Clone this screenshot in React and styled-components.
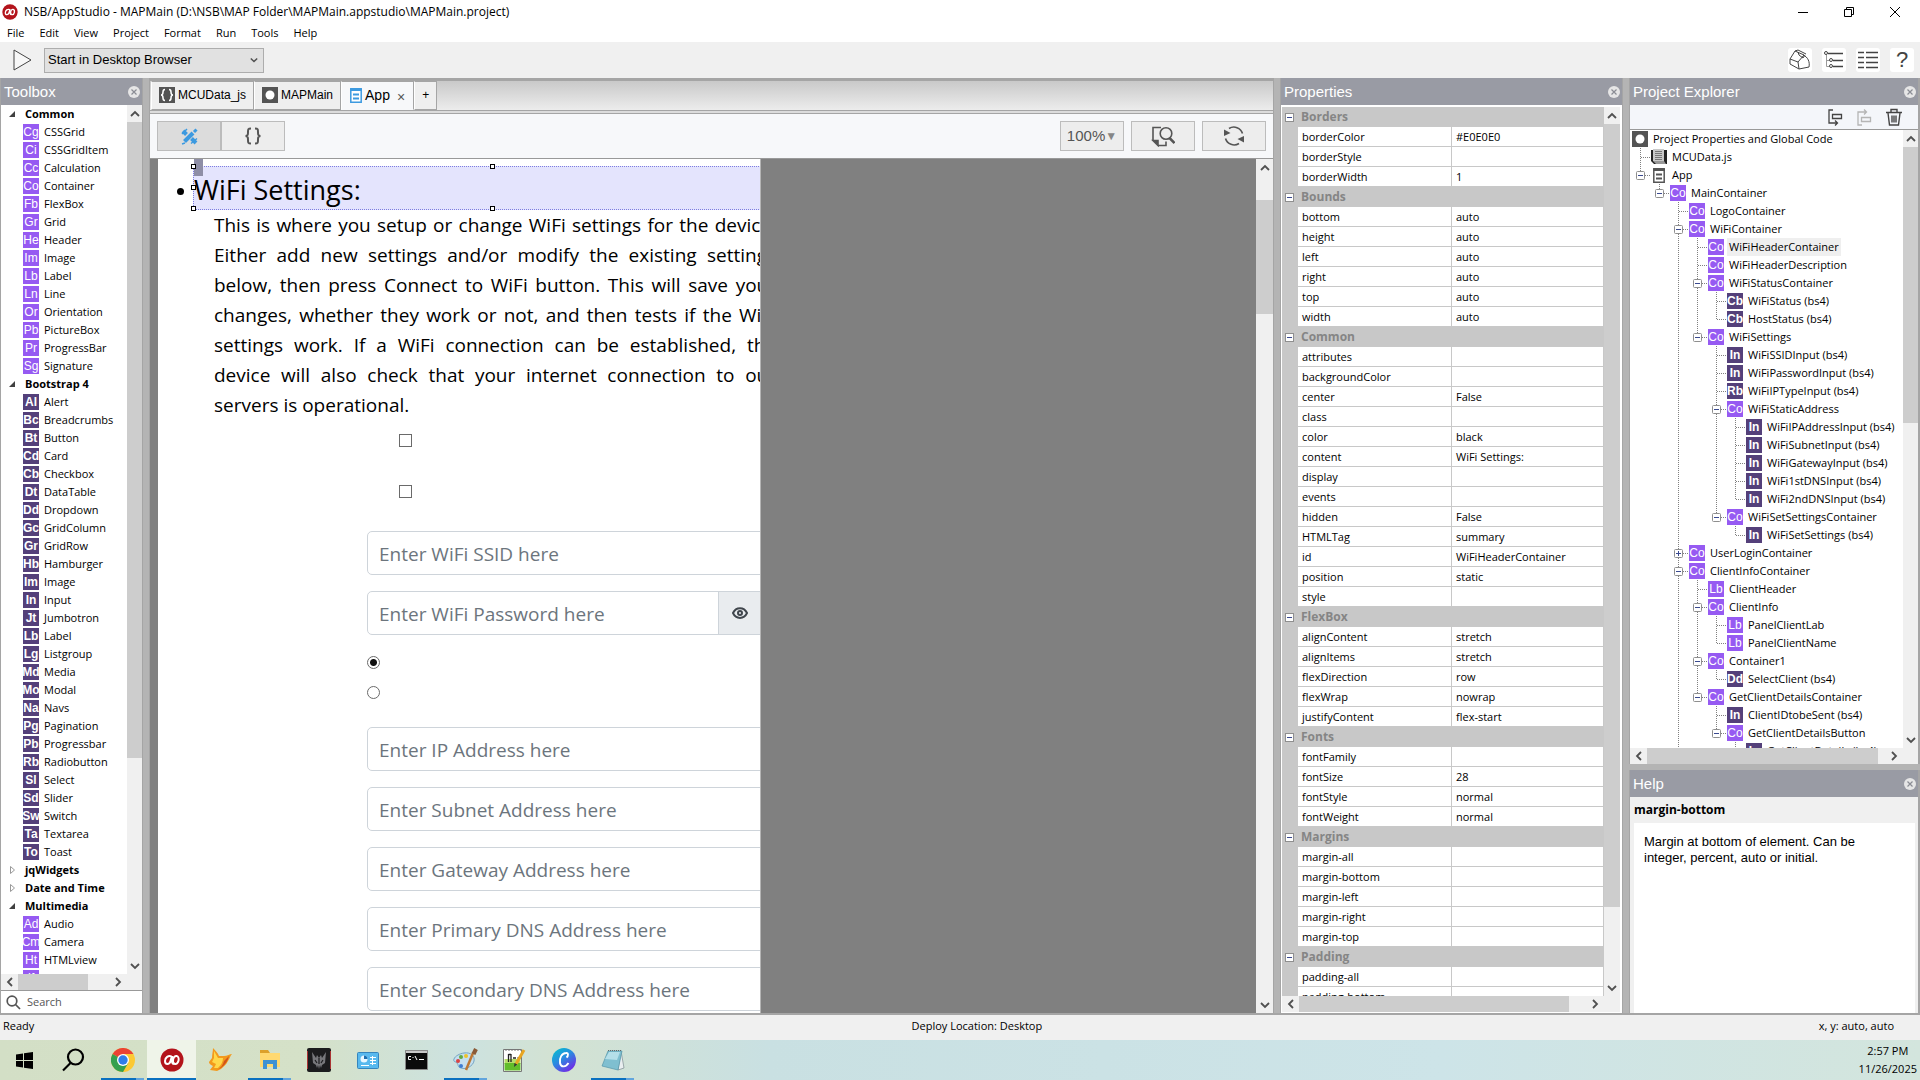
import React from "react";
import styled, { createGlobalStyle, css } from "styled-components";

//Data

const menus = ["File", "Edit", "View", "Project", "Format", "Run", "Tools", "Help"];

const toolbox = [
  {
    name: "Common",
    open: true,
    items: [
      ["Cg", "CSSGrid"],
      ["Ci", "CSSGridItem"],
      ["Cc", "Calculation"],
      ["Co", "Container"],
      ["Fb", "FlexBox"],
      ["Gr", "Grid"],
      ["He", "Header"],
      ["Im", "Image"],
      ["Lb", "Label"],
      ["Ln", "Line"],
      ["Or", "Orientation"],
      ["Pb", "PictureBox"],
      ["Pr", "ProgressBar"],
      ["Sg", "Signature"],
    ],
  },
  {
    name: "Bootstrap 4",
    open: true,
    dark: true,
    items: [
      ["Al", "Alert"],
      ["Bc", "Breadcrumbs"],
      ["Bt", "Button"],
      ["Cd", "Card"],
      ["Cb", "Checkbox"],
      ["Dt", "DataTable"],
      ["Dd", "Dropdown"],
      ["Gc", "GridColumn"],
      ["Gr", "GridRow"],
      ["Hb", "Hamburger"],
      ["Im", "Image"],
      ["In", "Input"],
      ["Jt", "Jumbotron"],
      ["Lb", "Label"],
      ["Lg", "Listgroup"],
      ["Md", "Media"],
      ["Mo", "Modal"],
      ["Na", "Navs"],
      ["Pg", "Pagination"],
      ["Pb", "Progressbar"],
      ["Rb", "Radiobutton"],
      ["Sl", "Select"],
      ["Sd", "Slider"],
      ["Sw", "Switch"],
      ["Ta", "Textarea"],
      ["To", "Toast"],
    ],
  },
  { name: "jqWidgets", items: [] },
  { name: "Date and Time", items: [] },
  {
    name: "Multimedia",
    open: true,
    items: [
      ["Ad", "Audio"],
      ["Cm", "Camera"],
      ["Ht", "HTMLview"],
      ["If", "iFrame"],
    ],
  },
];

const properties = [
  ["Borders", [["borderColor", "#E0E0E0"], ["borderStyle", ""], ["borderWidth", "1"]]],
  [
    "Bounds",
    [
      ["bottom", "auto"],
      ["height", "auto"],
      ["left", "auto"],
      ["right", "auto"],
      ["top", "auto"],
      ["width", "auto"],
    ],
  ],
  [
    "Common",
    [
      ["attributes", ""],
      ["backgroundColor", ""],
      ["center", "False"],
      ["class", ""],
      ["color", "black"],
      ["content", "WiFi Settings:"],
      ["display", ""],
      ["events", ""],
      ["hidden", "False"],
      ["HTMLTag", "summary"],
      ["id", "WiFiHeaderContainer"],
      ["position", "static"],
      ["style", ""],
    ],
  ],
  [
    "FlexBox",
    [
      ["alignContent", "stretch"],
      ["alignItems", "stretch"],
      ["flexDirection", "row"],
      ["flexWrap", "nowrap"],
      ["justifyContent", "flex-start"],
    ],
  ],
  [
    "Fonts",
    [
      ["fontFamily", ""],
      ["fontSize", "28"],
      ["fontStyle", "normal"],
      ["fontWeight", "normal"],
    ],
  ],
  [
    "Margins",
    [
      ["margin-all", ""],
      ["margin-bottom", ""],
      ["margin-left", ""],
      ["margin-right", ""],
      ["margin-top", ""],
    ],
  ],
  ["Padding", [["padding-all", ""], ["padding-bottom", ""]]],
];

// depth, tag, label, toggle
const project = [
  [0, "root", "Project Properties and Global Code"],
  [1, "script", "MCUData.js"],
  [1, "form", "App", "-"],
  [2, "Co", "MainContainer", "-"],
  [3, "Co", "LogoContainer"],
  [3, "Co", "WiFiContainer", "-"],
  [4, "Co", "WiFiHeaderContainer"],
  [4, "Co", "WiFiHeaderDescription"],
  [4, "Co", "WiFiStatusContainer", "-"],
  [5, "Cb", "WiFiStatus (bs4)"],
  [5, "Cb", "HostStatus (bs4)"],
  [4, "Co", "WiFiSettings", "-"],
  [5, "In", "WiFiSSIDInput (bs4)"],
  [5, "In", "WiFiPasswordInput (bs4)"],
  [5, "Rb", "WiFiIPTypeInput (bs4)"],
  [5, "Co", "WiFiStaticAddress", "-"],
  [6, "In", "WiFiIPAddressInput (bs4)"],
  [6, "In", "WiFiSubnetInput (bs4)"],
  [6, "In", "WiFiGatewayInput (bs4)"],
  [6, "In", "WiFi1stDNSInput (bs4)"],
  [6, "In", "WiFi2ndDNSInput (bs4)"],
  [5, "Co", "WiFiSetSettingsContainer", "-"],
  [6, "In", "WiFiSetSettings (bs4)"],
  [3, "Co", "UserLoginContainer", "+"],
  [3, "Co", "ClientInfoContainer", "-"],
  [4, "Lb", "ClientHeader"],
  [4, "Co", "ClientInfo", "-"],
  [5, "Lb", "PanelClientLab"],
  [5, "Lb", "PanelClientName"],
  [4, "Co", "Container1", "-"],
  [5, "Dd", "SelectClient (bs4)"],
  [4, "Co", "GetClientDetailsContainer", "-"],
  [5, "In", "ClientIDtobeSent (bs4)"],
  [5, "Co", "GetClientDetailsButton", "-"],
  [6, "In", "GetClientDetails (bs4)"],
];

const description = [
  "This is where you setup or change WiFi settings for the device.",
  "Either add new settings and/or modify the existing settings",
  "below, then press Connect to WiFi button. This will save your",
  "changes, whether they work or not, and then tests if the WiFi",
  "settings work. If a WiFi connection can be established, the",
  "device will also check that your internet connection to our",
  "servers is operational.",
];

const addresses = [
  "Enter IP Address here",
  "Enter Subnet Address here",
  "Enter Gateway Address here",
  "Enter Primary DNS Address here",
  "Enter Secondary DNS Address here",
];

// does a sibling at this depth follow further down the list?
const continues = (index, depth) => {
  for (let i = index + 1; i < project.length; i++) {
    if (project[i][0] < depth) return false;
    if (project[i][0] === depth) return true;
  }
  return depth === 3;
};

//Styled-Components

const GlobalStyle = createGlobalStyle`
  * {
    box-sizing: border-box;
  }
  body {
    margin: 0;
    background: #f0f0f0;
    color: #000;
    font: 12px/18px "Open Sans", "Noto Sans", sans-serif;
    overflow: hidden;
  }
  button, input, select {
    font: inherit;
    color: inherit;
    margin: 0;
    padding: 0;
    border: 0;
    border-radius: 0;
    background: none;
  }
  svg {
    display: block;
    flex: none;
  }
`;

const arial = css`
  font-family: "Liberation Sans", Arial, sans-serif;
`;

const Window = styled.div`
  display: flex;
  flex-direction: column;
  height: 100vh;
  font-size: 11px;
`;

const TitleBar = styled.header`
  display: flex;
  align-items: center;
  height: 23px;
  padding: 0 19px 0 2px;
  gap: 6px;
  background: #fff;
  font-size: 12px;
`;

const WindowTitle = styled.span`
  flex: 1;
`;

const WindowButtons = styled.div`
  display: flex;
  gap: 34px;
`;

const IconButton = styled.button`
  display: flex;
  align-items: center;
  justify-content: center;
`;

const MenuBar = styled.nav`
  display: flex;
  gap: 15px;
  height: 19px;
  padding: 1px 0 0 7px;
  background: #fff;
`;

const MainToolbar = styled.div`
  display: flex;
  align-items: center;
  height: 36px;
  padding: 0 6px 0 13px;
  gap: 10px;
`;

const StartSelect = styled.div`
  display: flex;
  align-items: center;
  width: 220px;
  margin-right: auto;
  padding-right: 5px;
  border: 1px solid #adadad;
  background: #e1e1e1;

  select {
    ${arial}
    flex: 1;
    height: 23px;
    padding-left: 3px;
    font-size: 13px;
    appearance: none;
  }
`;

const ToolButton = styled(IconButton)`
  ${arial}
  width: 24px;
  height: 24px;
  border-radius: 3px;
  background: #fff;
  font-size: 22px;
  color: #444;
`;

const Workspace = styled.main`
  display: grid;
  grid-template-columns: 143px minmax(0, 1fr) 343px 291px;
  column-gap: 6px;
  flex: 1;
  min-height: 0;
  border-bottom: 2px solid #a5a5a5;
  background: #b4b4b4;
`;

const Panel = styled.section`
  display: flex;
  flex-direction: column;
  min-width: 0;
  min-height: 0;
  border: solid #a5a5a5;
  border-width: 0 ${(p) => p.$right || 1}px 0 1px;
  background: ${(p) => p.$bg || "#fff"};
`;

const SideColumn = styled.div`
  display: grid;
  grid-template-rows: minmax(0, 1fr) 243px;
  row-gap: 6px;
  min-height: 0;
`;

const PanelHeader = styled.header`
  ${arial}
  display: flex;
  flex: none;
  align-items: center;
  justify-content: space-between;
  height: 27px;
  padding: 0 2px 0 3px;
  background: #999ba4;
  color: #fff;
  font-size: 15px;
`;

const ScrollArea = styled.div`
  display: flex;
  flex: 1;
  min-height: 0;
`;

const Clip = styled.div`
  flex: 1;
  min-width: 0;
  overflow: hidden;
  background: ${(p) => p.$bg || "#fff"};
`;

const ScrollTrack = styled.div`
  display: flex;
  flex: none;
  flex-direction: ${(p) => (p.$across ? "row" : "column")};
  ${(p) => (p.$across ? `height: 16px; padding-right: ${p.$corner}px;` : `width: ${p.$wide || 15}px;`)}
  background: #f0f0f0;
`;

const ScrollArrow = styled(IconButton)`
  flex: 0 0 17px;
`;

const ScrollPart = styled.div`
  flex: ${(p) => p.$share} 0 0;
  background: ${(p) => (p.$thumb ? "#cdcdcd" : "transparent")};
`;

const GroupRow = styled.div`
  display: flex;
  align-items: center;
  height: 18px;
  padding-left: 8px;
  gap: 8px;
  font-weight: 700;
`;

const ItemRow = styled.div`
  display: flex;
  align-items: center;
  height: 18px;
  padding-left: 22px;
  gap: 5px;
  white-space: nowrap;
`;

const Tag = styled.span`
  ${arial}
  display: flex;
  flex: none;
  justify-content: center;
  width: 16px;
  height: 16px;
  overflow: hidden;
  background: ${(p) => (p.$dark ? "#54407a" : "#965af2")};
  color: #fff;
  font-size: 12px;
  font-weight: ${(p) => (p.$dark ? 700 : 400)};
  line-height: 17px;
`;

const SearchBox = styled.label`
  display: flex;
  align-items: center;
  height: 23px;
  padding-left: 5px;
  gap: 6px;
  border-top: 1px solid #999;
  background: #fff;

  input {
    width: 90px;
    outline: none;
  }
  input::placeholder {
    color: #555;
    opacity: 1;
  }
`;

const TabStrip = styled.div`
  display: flex;
  align-items: flex-end;
  flex: none;
  height: 35px;
  padding: 0 0 3px 1px;
  border-top: 3px solid #a5a5a5;
  background: linear-gradient(#c9c9c9, #f0f0f0);
  box-shadow: inset 0 -2px #dcdcdc, inset 0 -3px #a5a5a5;
`;

const Tab = styled.button`
  ${arial}
  display: flex;
  align-items: center;
  height: 29px;
  padding: 0 ${(p) => p.$pad || 7}px 1px;
  gap: 3px;
  border: 1px solid #a5a5a5;
  border-left-color: #fff;
  background: ${(p) => (p.$active ? "#f7f8fa" : "#efefef")};
  font-size: ${(p) => (p.$active ? 14 : 12)}px;
  ${(p) => p.$active && "border-bottom-color: #f7f8fa;"}
`;

const TabClose = styled.span`
  padding: 3px 0 0 4px;
  color: #555;
`;

const DesignToolbar = styled.div`
  display: flex;
  flex: none;
  align-items: center;
  height: 46px;
  padding: 0 7px;
  gap: 7px;
  border-top: 1px solid #a5a5a5;
  border-bottom: 1px solid #999;
  background: #f7f8fa;
`;

const ModeSwitch = styled.div`
  display: flex;
  margin-right: auto;
`;

const DesignButton = styled(IconButton)`
  ${arial}
  width: 64px;
  height: 30px;
  border: 1px solid #bcbcbc;
  background: ${(p) => (p.$pressed ? "#dcdcdc" : "#ededed")};
  color: #555;
  font-size: 15px;

  & > small {
    color: #858585;
    font-size: 12px;
  }
`;

const Canvas = styled(Clip)`
  padding-left: 8px;
`;

const Page = styled.article`
  width: 603px;
  height: 100%;
  padding-top: 7px;
  overflow: hidden;
  border-right: 1px solid #b5b5b5;
  background: #fff;
  font-size: 19px;
`;

const SummaryRow = styled.div`
  display: grid;
  grid-template-columns: 35px 600px;
  height: 41px;
`;

const Bullet = styled.span`
  padding: 22px 0 0 19px;

  &::before {
    content: "";
    display: block;
    width: 7px;
    height: 7px;
    border-radius: 50%;
    background: #000;
  }
`;

const Summary = styled.h1`
  position: relative;
  margin: 0;
  padding-top: 4px;
  border: 1px dotted #7d7de0;
  background: #e4e4fd;
  font-size: 27px;
  font-weight: 400;
  line-height: 38px;
`;

const Grip = styled.i`
  position: absolute;
  top: -8px;
  left: 0;
  width: 9px;
  height: 17px;
  background: #8e8ea6;
`;

const Handle = styled.i`
  position: absolute;
  top: ${(p) => p.$y};
  left: ${(p) => p.$x};
  width: 5px;
  height: 5px;
  margin: -3px;
  border: 1px solid #000;
  background: #fff;
`;

const Description = styled.p`
  width: 562px;
  margin: 3px 0 14px 56px;
  line-height: 30px;

  span {
    display: block;
    white-space: nowrap;
    text-align-last: justify;
  }
  span:last-child {
    text-align-last: left;
  }
`;

const StatusChecks = styled.div`
  display: flex;
  flex-direction: column;
  gap: 38px;
  padding: 0 0 33px 241px;
`;

const Check = styled.input`
  width: 13px;
  height: 13px;
  border: 1px solid #6a6a6a;
  background: #fff;
  appearance: none;
`;

const FieldList = styled.div`
  display: flex;
  flex-direction: column;
  width: 640px;
  padding-left: 209px;
  gap: 16px;
`;

const Field = styled.div`
  display: flex;
  border: 1px solid #ced4da;
  border-radius: 5px;
  overflow: hidden;

  input {
    flex: 1;
    height: 42px;
    padding: 2px 11px 0;
    outline: none;
  }
  input::placeholder {
    color: #6c757d;
    opacity: 1;
  }
`;

const Reveal = styled(IconButton)`
  width: 79px;
  padding-left: 13px;
  justify-content: flex-start;
  border-left: 1px solid #ced4da;
  background: #e9ecef;
`;

const RadioList = styled.div`
  display: flex;
  flex-direction: column;
  gap: 17px;
  padding: 5px 0 12px;
`;

const Radio = styled.input`
  width: 13px;
  height: 13px;
  border: 1px solid #6a6a6a;
  border-radius: 50%;
  background: #fff;
  appearance: none;

  &:checked {
    background: radial-gradient(#111 0 3px, #fff 4px);
  }
`;

const PropertyFrame = styled.div`
  display: flex;
  flex: 1;
  flex-direction: column;
  min-height: 0;
  padding: 2px 2px 1px 1px;
`;

const PropertyTable = styled.table`
  width: 100%;
  border-spacing: 0;
  table-layout: fixed;
  background: #c8c8c8;

  th, td {
    height: 20px;
    padding: 0;
    text-align: left;
    line-height: 18px;
    font-weight: 400;
  }
  th[colspan] {
    color: #858585;
    font-size: 12px;
    font-weight: 700;
    padding-left: 3px;
  }
`;

const Cell = styled.td`
  && {
    padding-left: 4px;
    border-bottom: 1px solid #c8c8c8;
    border-right: 1px solid #c8c8c8;
    background: #fff;
  }
`;

const Toggle = styled.button`
  display: flex;
  flex: none;
  align-items: center;
  justify-content: center;
  width: 9px;
  height: 9px;
  margin-left: 3px;
  border: 1px solid #8f8f8f;
  background: #fff;
`;

const ExplorerTools = styled.div`
  display: flex;
  flex: none;
  align-items: center;
  justify-content: flex-end;
  height: 25px;
  padding-right: 16px;
  gap: 14px;
  border-bottom: 1px solid #999;
  background: #f4f6fa;
`;

const TreeRow = styled.div`
  display: flex;
  align-items: center;
  height: 18px;
  padding-left: 2px;
  white-space: nowrap;
`;

const TreeLabel = styled.span`
  margin-left: 3px;
  padding: 0 2px;
  background: ${(p) => (p.$selected ? "#efefef" : "transparent")};
`;

const HelpTopic = styled.h2`
  margin: 0;
  padding: 4px;
  font-size: 12px;
  line-height: 18px;
`;

const HelpText = styled.p`
  ${arial}
  flex: 1;
  margin: 0 3px 0 4px;
  padding: 11px 36px 0 10px;
  background: #fff;
  font-size: 13px;
  line-height: 16px;
`;

const StatusBar = styled.footer`
  display: grid;
  grid-template-columns: 16fr auto 15fr;
  height: 25px;
  padding: 2px 26px 0 3px;

  span:last-child {
    text-align: right;
  }
`;

const Taskbar = styled.footer`
  display: flex;
  height: 40px;
  background: linear-gradient(90deg, #d3dfc6, #d5e1c8 16%, #cce2e0 24%, #d3e2d2 29%, #c9e0e2 40%, #cde4e8 75%, #d3e5dd);
`;

const TaskButton = styled(IconButton)`
  width: 49px;
  border-bottom: 2px solid transparent;
  padding-top: 2px;
  ${(p) => p.$active && "background: #eff4e9; border-color: #0a70c0;"}
  ${(p) =>
    p.$running &&
    "border-image: linear-gradient(90deg, transparent 5px, #0a70c0 5px 37px, #62a5dd 37px 44px, transparent 44px) 2;"}
`;

const Clock = styled.time`
  margin-left: auto;
  padding: 2px 3px 0 0;
  text-align: center;
  line-height: 18px;
`;

//Icons

const Chevron = ({ turn = 0, size = 10 }) => (
  <svg width={size} height={size} viewBox="0 0 10 10" fill="none" stroke="#505050" strokeWidth="1.8">
    <path d="M1 7l4-4 4 4" transform={`rotate(${turn} 5 5)`} />
  </svg>
);

const CloseMark = () => (
  <svg width="12" height="12" viewBox="0 0 12 12">
    <circle cx="6" cy="6" r="6" fill="#e6e6e6" />
    <path d="M3.5 3.5l5 5M8.500 3.500l-5 5" stroke="#8b8d95" strokeWidth="1.200" />
  </svg>
);

const Logo = ({ size }) => (
  <svg width={size} height={size} viewBox="0 0 24 24">
    <circle cx="12" cy="12" r="11.500" fill="#b3141b" />
    <g fill="none" stroke="#fff" strokeWidth="2">
      <path d="M11.500 8.500c-3-1.500-6.500 1-6.500 4.500 0 4 4.500 4 5.500 0l1.500-5v5.500c.3 2 1 2.500 2.200 2.200" />
      <ellipse cx="15.800" cy="12" rx="2.800" ry="4" transform="rotate(12 15.800 12)" />
    </g>
  </svg>
);

const RootIcon = () => (
  <svg width="16" height="16" viewBox="0 0 16 16">
    <path fill="#545454" d="M0 0h16v16H0z" />
    <circle cx="8" cy="8" r="4.500" fill="#fff" />
  </svg>
);

const ScriptIcon = () => (
  <svg width="16" height="16" viewBox="0 0 16 16">
    <path fill="#222" d="M0 1h16v14H3L0 12z" />
    <path fill="#c9c9c9" d="M2 0h11v12H2z" />
    <path fill="#999" d="M2 12h11l2 3H5z" />
    <path stroke="#777" d="M4 2.500h7M4 4.500h7M4 6.500h7M4 8.500h7M4 10.500h7" />
  </svg>
);

const FormIcon = ({ color = "#555", inset = 0 }) => (
  <svg width={12 + inset * 2} height="15" viewBox={`${-inset} 0 ${12 + inset * 2} 15`}>
    <path fill="#fff" stroke={color} strokeWidth="1.500" d="M.8.8h10.400v13.400H.8z" />
    <path stroke={color} strokeWidth="2" d="M0 2h12M3 6.500h6M3 10.500h6" />
  </svg>
);

const CodeIcon = () => (
  <svg width="16" height="16" viewBox="0 0 16 16">
    <path fill="#545454" d="M0 0h16v16H0z" />
    <g fill="none" stroke="#fff" strokeWidth="1.500">
      <path d="M6 2.500c-2 0-2 1-2 2.500S3.500 8 2 8c1.500 0 2 1.500 2 3s0 2.500 2 2.500" />
      <path d="M10 2.500c2 0 2 1 2 2.500s.5 3 2 3c-1.500 0-2 1.500-2 3s0 2.500-2 2.500" />
    </g>
  </svg>
);

const treeIcons = { root: <RootIcon />, script: <ScriptIcon />, form: <FormIcon inset={2} /> };
const lightTags = ["Co", "Lb"];

//Components

const Scroll = ({ across, corner = 15, wide, parts }) => (
  <ScrollTrack $across={across} $corner={corner} $wide={wide} aria-hidden="true">
    <ScrollArrow tabIndex={-1}>
      <Chevron turn={across ? -90 : 0} />
    </ScrollArrow>
    <ScrollPart $share={parts[0]} />
    <ScrollPart $share={parts[1]} $thumb />
    <ScrollPart $share={parts[2]} />
    <ScrollArrow tabIndex={-1}>
      <Chevron turn={across ? 90 : 180} />
    </ScrollArrow>
  </ScrollTrack>
);

const Header = ({ title }) => (
  <PanelHeader>
    {title}
    <IconButton aria-label={`Close ${title}`}>
      <CloseMark />
    </IconButton>
  </PanelHeader>
);

const Guide = ({ index, level, depth, toggle }) => {
  const more = continues(index, level);
  const own = level === depth;
  return (
    <svg width="19" height="18" viewBox="0 0 19 18" stroke="#808080" strokeDasharray="1 1" fill="none">
      {(more || own) && <path d={more ? "M8.500 0v18" : "M8.500 0v9"} />}
      {own && <path d="M9 9.500h10" />}
      {own && toggle && (
        <g strokeDasharray="none">
          <rect x="4.500" y="5.500" width="8" height="8" rx="1" fill="#fff" stroke="#8f8f8f" />
          <path stroke="#3a4a90" d={toggle === "-" ? "M6 9.500h5" : "M6 9.500h5M8.500 7v5"} />
        </g>
      )}
    </svg>
  );
};

function Toolbox() {
  return (
    <Panel>
      <Header title="Toolbox" />
      <ScrollArea>
        <Clip>
          {toolbox.map((group) => (
            <div key={group.name}>
              <GroupRow>
                <svg width="8" height="8" viewBox="0 0 8 8">
                  {group.open ? (
                    <path d="M6 1v6H0z" fill="#404040" />
                  ) : (
                    <path d="M1.500 0.500l4 3.500-4 3.500z" fill="#fff" stroke="#999" />
                  )}
                </svg>
                {group.name}
              </GroupRow>
              {group.items.map(([tag, name]) => (
                <ItemRow key={name}>
                  <Tag $dark={group.dark}>{tag}</Tag>
                  {name}
                </ItemRow>
              ))}
            </div>
          ))}
        </Clip>
        <Scroll parts={[0, 636, 199]} />
      </ScrollArea>
      <Scroll across corner={16} parts={[0, 70, 21]} />
      <SearchBox>
        <svg width="15" height="15" viewBox="0 0 15 15" fill="none" stroke="#555" strokeWidth="1.700">
          <circle cx="6" cy="6" r="4.800" />
          <path d="M9.500 9.500l4.500 4.500" />
        </svg>
        <input placeholder="Search" aria-label="Search toolbox" />
      </SearchBox>
    </Panel>
  );
}

function Designer() {
  return (
    <Panel>
      <TabStrip>
        <Tab>
          <CodeIcon /> MCUData_js
        </Tab>
        <Tab>
          <RootIcon /> MAPMain
        </Tab>
        <Tab $active $pad={8}>
          <FormIcon color="#3d9ae0" /> App <TabClose>×</TabClose>
        </Tab>
        <Tab>+</Tab>
      </TabStrip>
      <DesignToolbar>
        <ModeSwitch>
          <DesignButton $pressed aria-label="Design view">
            <svg width="17" height="17" viewBox="0 0 17 17" stroke="#3d9ae0" fill="none">
              <path strokeWidth="4" d="M3.500 13.500L12 5" />
              <path strokeWidth="3" d="M13 4l2.500-2.500" />
              <path strokeWidth="4" d="M2 3l3.500 3.500M10.500 10.500L15 15" />
              <path strokeWidth="1.500" d="M1 16l3-1M1 6l5-5M10 15.500l6-5" />
            </svg>
          </DesignButton>
          <DesignButton aria-label="Code view">
            <svg width="18" height="18" viewBox="0 0 18 18" stroke="#555" strokeWidth="2" fill="none">
              <path d="M7 1.500c-3 0-3 1-3 3.500S4 9 1.500 9C4 9 4 10.500 4 13s0 3.500 3 3.500" />
              <path d="M11 1.500c3 0 3 1 3 3.500s0 4 2.500 4c-2.500 0-2.500 1.500-2.500 4s0 3.500-3 3.500" />
            </svg>
          </DesignButton>
        </ModeSwitch>
        <DesignButton>
          100%<small>▼</small>
        </DesignButton>
        <DesignButton aria-label="Preview">
          <svg width="24" height="21" viewBox="0 0 24 21" fill="none" stroke="#555" strokeWidth="1.600">
            <path d="M10 1.500H2v13M7 19.500h8v-4" />
            <path fill="#555" d="M2 14.500h5v5z" />
            <circle cx="15" cy="7.500" r="5.800" />
            <path strokeWidth="2.500" d="M18.500 12l5 5" />
          </svg>
        </DesignButton>
        <DesignButton aria-label="Refresh">
          <svg width="22" height="22" viewBox="0 0 22 22" fill="none" stroke="#555" strokeWidth="1.600">
            <path d="M6 3.500a9 9 0 0 1 13.500 5M16 18.500a9 9 0 0 1-13.500-5" />
            <path fill="#555" stroke="none" d="M1 4.500V11l6.500-3zM21 17.500V11l-6.500 3z" />
          </svg>
        </DesignButton>
      </DesignToolbar>
      <ScrollArea>
        <Canvas $bg="#808080">
          <Page>
            <SummaryRow>
              <Bullet />
              <Summary>
                <Grip />
                WiFi Settings:
                <Handle $x="0%" $y="0%" />
                <Handle $x="50%" $y="0%" />
                <Handle $x="0%" $y="50%" />
                <Handle $x="0%" $y="100%" />
                <Handle $x="50%" $y="100%" />
              </Summary>
            </SummaryRow>
            <Description>
              {description.map((line) => (
                <span key={line}>{line}</span>
              ))}
            </Description>
            <StatusChecks>
              <Check type="checkbox" aria-label="WiFiStatus" />
              <Check type="checkbox" aria-label="HostStatus" />
            </StatusChecks>
            <FieldList>
              <Field>
                <input placeholder="Enter WiFi SSID here" aria-label="WiFi SSID" />
              </Field>
              <Field>
                <input placeholder="Enter WiFi Password here" aria-label="WiFi Password" />
                <Reveal aria-label="Show password">
                  <svg width="16" height="12" viewBox="0 0 16 12" fill="none" stroke="#40464d" strokeWidth="2">
                    <path d="M1 6c3-6.500 11-6.500 14 0-3 6.500-11 6.500-14 0z" />
                    <circle cx="8" cy="6" r="2" />
                  </svg>
                </Reveal>
              </Field>
              <RadioList>
                <Radio type="radio" name="ipType" aria-label="Dynamic IP" defaultChecked />
                <Radio type="radio" name="ipType" aria-label="Static IP" />
              </RadioList>
              {addresses.map((hint) => (
                <Field key={hint}>
                  <input placeholder={hint} aria-label={hint} />
                </Field>
              ))}
            </FieldList>
          </Page>
        </Canvas>
        <Scroll wide={17} parts={[24, 114, 680]} />
      </ScrollArea>
    </Panel>
  );
}

function Properties() {
  return (
    <Panel>
      <Header title="Properties" />
      <PropertyFrame>
        <ScrollArea>
          <Clip $bg="#c8c8c8">
            <PropertyTable>
              <colgroup>
                <col width="16" />
                <col width="154" />
                <col />
              </colgroup>
              {properties.map(([group, rows]) => (
                <tbody key={group}>
                  <tr>
                    <td>
                      <Toggle aria-label={`Collapse ${group}`}>
                        <svg width="5" height="5" viewBox="0 0 5 5" stroke="#3a4a90">
                          <path d="M0 2.500h5" />
                        </svg>
                      </Toggle>
                    </td>
                    <th colSpan={2}>{group}</th>
                  </tr>
                  {rows.map(([name, value]) => (
                    <tr key={name}>
                      <td />
                      <Cell as="th">{name}</Cell>
                      <Cell>{value}</Cell>
                    </tr>
                  ))}
                </tbody>
              ))}
            </PropertyTable>
          </Clip>
          <Scroll wide={16} parts={[0, 783, 72]} />
        </ScrollArea>
        <Scroll across corner={17} parts={[0, 271, 17]} />
      </PropertyFrame>
    </Panel>
  );
}

function Explorer() {
  return (
    <Panel $right={2}>
      <Header title="Project Explorer" />
      <ExplorerTools>
        <IconButton aria-label="Move down">
          <svg width="15" height="17" viewBox="0 0 15 17" fill="none" stroke="#444" strokeWidth="1.300">
            <path d="M5 1H1v13h8M7 11.500l2.500 2.500L7 16.500M4.500 5.500h9v4h-9z" />
          </svg>
        </IconButton>
        <IconButton aria-label="Move up" disabled>
          <svg width="15" height="17" viewBox="0 0 15 17" fill="none" stroke="#b5b5b5" strokeWidth="1.300">
            <path d="M5 16H1V3h8M7 .5L9.500 3 7 5.500M4.500 8.500h9v4h-9z" />
          </svg>
        </IconButton>
        <IconButton aria-label="Delete">
          <svg width="16" height="18" viewBox="0 0 16 18" fill="none" stroke="#444" strokeWidth="1.400">
            <path d="M0 4.500h16M5 4V1.500h6V4M2 5l1.500 12h9L14 5M6 7.500v7M8 7.500v7M10 7.500v7" />
          </svg>
        </IconButton>
      </ExplorerTools>
      <ScrollArea>
        <Clip>
          {project.map(([depth, tag, label, toggle], index) => (
            <TreeRow key={label}>
              {Array.from({ length: depth }, (_, i) => (
                <Guide key={i} index={index} level={i + 1} depth={depth} toggle={toggle} />
              ))}
              {treeIcons[tag] || <Tag $dark={!lightTags.includes(tag)}>{tag}</Tag>}
              <TreeLabel $selected={label === "WiFiHeaderContainer"}>{label}</TreeLabel>
            </TreeRow>
          ))}
        </Clip>
        <Scroll parts={[0, 276, 308]} />
      </ScrollArea>
      <Scroll across corner={16} parts={[0, 232, 7]} />
    </Panel>
  );
}

function Help() {
  return (
    <Panel $right={2} $bg="#f0f0f0">
      <Header title="Help" />
      <HelpTopic>margin-bottom</HelpTopic>
      <HelpText>Margin at bottom of element. Can be integer, percent, auto or initial.</HelpText>
    </Panel>
  );
}

const tasks = [
  [
    "Start",
    <svg width="17" height="17" viewBox="0 0 17 17">
      <path d="M0 2.500L7 1.500V8H0zM8 1.300L17 0v8H8zM0 9h7v6.500l-7-1zM8 9h9v8l-9-1.300z" />
    </svg>,
  ],
  [
    "Search",
    <svg width="23" height="24" viewBox="0 0 23 24" fill="none" stroke="#000" strokeWidth="2.200">
      <circle cx="13.500" cy="9" r="7.500" />
      <path d="M8.500 15L1 22.500" />
    </svg>,
  ],
  [
    "Chrome",
    <svg width="24" height="24" viewBox="0 0 24 24">
      <circle cx="12" cy="12" r="12" fill="#fcc934" />
      <path fill="#ea4335" d="M12 12L1.600 6A12 12 0 0 1 22.400 6H12z" />
      <path fill="#34a04f" d="M12 12L1.600 6A12 12 0 0 0 12 24l5.200-9z" />
      <circle cx="12" cy="12" r="6" fill="#fff" />
      <circle cx="12" cy="12" r="4.700" fill="#2f7de9" />
    </svg>,
    "running",
  ],
  ["AppStudio", <Logo size={24} />, "active"],
  [
    "FoxPro",
    <svg width="24" height="24" viewBox="0 0 24 24">
      <path fill="#f39a1c" d="M4 0c2 2 5 5 6 8h5c3 0 6-2 8-2-2 2-2 4-4 7-2 4-5 6-7 8l-4 2-7-1 3-4c-3-1-4-3-4-4l3-4C3 6 4 3 4 0z" />
      <path fill="#ffd84a" d="M5 3l4 7h5c0 4-2 7-5 10H5l2-4-4-2 2-4z" />
      <path fill="#d3541a" d="M15 13l5-5c-1 5-4 9-8 12l-4 2c4-2 6-5 7-9z" />
    </svg>,
  ],
  [
    "File Explorer",
    <svg width="22" height="20" viewBox="0 0 22 20">
      <path fill="#dca12b" d="M1 0h8l2 3H1z" />
      <path fill="#ffd970" d="M1 3h20v14H1z" />
      <path fill="#3f92d2" d="M4 19v-9h14v9h-4v-5H8v5z" />
    </svg>,
    "running",
  ],
  [
    "Predator",
    <svg width="24" height="24" viewBox="0 0 24 24">
      <rect width="24" height="24" rx="2" fill="#1c1c1e" />
      <path stroke="#a33" d="M.5 3v18M23.500 3v18" />
      <path fill="#77777b" d="M5 4l4 6 1-3 2 3 2-3 1 3 4-6-1 11-3 2-1 3-1-3-1 4-1-4-1 3-1-3-3-2z" />
      <path stroke="#1c1c1e" strokeWidth="1.200" d="M12 10v6M8 12l2 3M16 12l-2 3" />
    </svg>,
  ],
  [
    "Control Panel",
    <svg width="22" height="17" viewBox="0 0 22 17">
      <rect x=".5" y=".5" width="21" height="16" rx="1" fill="#58b9ee" stroke="#3585bd" />
      <circle cx="7" cy="7" r="3.500" fill="#e9f7ff" />
      <path fill="#1b6fb0" d="M7 7V3.500A3.500 3.500 0 0 1 10.500 7z" />
      <path stroke="#fff" d="M13 5.500h6M13 8.500h6M4 13.500h8M13 11.500h6M15.500 4v9" />
    </svg>,
  ],
  [
    "Command Prompt",
    <svg width="23" height="20" viewBox="0 0 23 20">
      <path fill="#0b0b0b" stroke="#888" d="M.5.500h22v19H.5z" />
      <path fill="#c8c8c8" d="M1 1h21v2H1z" />
      <path stroke="#fff" fill="none" d="M6 6.500H3.500v3H6M8 7v1M10 6l2 4M14 9.500h5" />
    </svg>,
  ],
  [
    "Paint",
    <svg width="25" height="24" viewBox="0 0 25 24">
      <path fill="#c4dfef" stroke="#74a3c2" d="M11 5c7-1 11 3 10 8s-8 9-13 7c-4-1-2-3-4-5s-4-1-3-4 6-5.500 10-6z" />
      <circle cx="5" cy="13" r="2" fill="#d94242" />
      <circle cx="8" cy="9" r="2" fill="#62a845" />
      <circle cx="13" cy="8" r="2" fill="#eec22b" />
      <circle cx="8" cy="18" r="2" fill="#3f7dd0" />
      <path stroke="#bd7733" strokeWidth="2.500" d="M13 22l7-17" />
      <path stroke="#8a5a36" strokeWidth="4" d="M20.500 6L23 1" />
    </svg>,
    "running",
  ],
  [
    "Notepad++",
    <svg width="23" height="24" viewBox="0 0 23 24">
      <path fill="#fff" stroke="#777" d="M.5 1.500h18v22H.5z" />
      <path fill="#b6dd6a" d="M1.500 11h16v5h-16z" />
      <path fill="#62bd2a" d="M1.500 15h16v7.500h-16z" />
      <path stroke="#222" strokeWidth="1.300" fill="none" d="M5.500 6v8M8 6v8M5.500 6.500H8M10 10h3M14.500 10h3" />
      <path stroke="#bbb" d="M2 2.500h16" strokeDasharray="2 1" />
      <path stroke="#e8a521" strokeWidth="3" d="M13 16l8-14" />
      <path fill="#333" d="M11.500 15l-.5 4 3.200-2.500z" />
    </svg>,
  ],
  [
    "Canva",
    <svg width="24" height="24" viewBox="0 0 24 24">
      <defs>
        <linearGradient id="canva" x1="0" y1="0" x2=".7" y2="1">
          <stop offset="0" stopColor="#00c4cc" />
          <stop offset=".5" stopColor="#2a8be0" />
          <stop offset="1" stopColor="#7329e6" />
        </linearGradient>
      </defs>
      <circle cx="12" cy="12" r="12" fill="url(#canva)" />
      <path fill="none" stroke="#fff" strokeWidth="1.900" d="M14.500 9.500c2-1.500 2-5-.5-4.500-4 0-7 5-6 10 1 5 6 4 8.500 0" />
    </svg>,
  ],
  [
    "Notepad",
    <svg width="24" height="22" viewBox="0 0 24 22">
      <path fill="#e9eef0" stroke="#7c8b91" strokeWidth=".7" d="M20 2l3 17-6 2z" />
      <path fill="#7fbfd0" stroke="#5596aa" strokeWidth=".7" d="M7 2h14l-4 19-16-4z" />
      <path fill="#b5dfe9" d="M8 3h11l-3 8-12-1z" />
      <path stroke="#666" strokeDasharray="1 1" d="M7 1.500h14" />
    </svg>,
    "running",
  ],
];

export default function App() {
  return (
    <Window>
      <GlobalStyle />
      <TitleBar>
        <Logo size={16} />
        <WindowTitle>NSB/AppStudio - MAPMain (D:\NSB\MAP Folder\MAPMain.appstudio\MAPMain.project)</WindowTitle>
        <WindowButtons>
          <IconButton aria-label="Minimize">
            <svg width="12" height="12" viewBox="0 0 12 12" stroke="#000">
              <path d="M1 6.500h10" />
            </svg>
          </IconButton>
          <IconButton aria-label="Restore">
            <svg width="12" height="12" viewBox="0 0 12 12" stroke="#000" fill="none">
              <path d="M1.500 3.500h7v7h-7zM3.500 3V1.500h7v7H9" />
            </svg>
          </IconButton>
          <IconButton aria-label="Close">
            <svg width="12" height="12" viewBox="0 0 12 12" stroke="#000">
              <path d="M1 1l10 10M11 1L1 11" />
            </svg>
          </IconButton>
        </WindowButtons>
      </TitleBar>
      <MenuBar>
        {menus.map((name) => (
          <button key={name}>{name}</button>
        ))}
      </MenuBar>
      <MainToolbar>
        <IconButton aria-label="Run">
          <svg width="21" height="22" viewBox="0 0 21 22" fill="#f7f7f7" stroke="#444">
            <path d="M1 1v20l17-10z" />
          </svg>
        </IconButton>
        <StartSelect>
          <select aria-label="Start in">
            <option>Start in Desktop Browser</option>
          </select>
          <Chevron turn={180} size={8} />
        </StartSelect>
        <ToolButton aria-label="Toolbox">
          <svg width="24" height="24" viewBox="0 0 24 24" fill="none" stroke="#444">
            <path d="M2 11l5-8 9 4-6 7zM2 11v5l9 5 10-2c1-5-1-10-6-12M10 14l1 7M7 3l3-1 8 4M10 4l1 3 4 3 2-3" />
          </svg>
        </ToolButton>
        <ToolButton aria-label="Project explorer">
          <svg width="24" height="24" viewBox="0 0 24 24" fill="none" stroke="#444">
            <circle cx="4" cy="5" r="1.500" />
            <circle cx="9" cy="12" r="1.500" />
            <circle cx="9" cy="18" r="1.500" />
            <path strokeWidth="1.300" d="M6 5.500h15M11 12.500h10M11 18.500h10" />
            <path stroke="#999" d="M4.500 7v11.500H7M4.500 12.500H7" />
          </svg>
        </ToolButton>
        <ToolButton aria-label="Properties">
          <svg width="24" height="24" viewBox="0 0 24 24" fill="none" stroke="#444" strokeWidth="1.500">
            <path d="M2 4.500h6M2 9.500h6M2 14.500h6M2 19.500h6M10 4.500h12M10 9.500h12M10 14.500h12M10 19.500h12" />
          </svg>
        </ToolButton>
        <ToolButton aria-label="Help">?</ToolButton>
      </MainToolbar>
      <Workspace>
        <Toolbox />
        <Designer />
        <Properties />
        <SideColumn>
          <Explorer />
          <Help />
        </SideColumn>
      </Workspace>
      <StatusBar>
        <span>Ready</span>
        <span>Deploy Location: Desktop</span>
        <span>x, y: auto, auto</span>
      </StatusBar>
      <Taskbar>
        {tasks.map(([name, icon, state]) => (
          <TaskButton key={name} aria-label={name} $active={state === "active"} $running={state === "running"}>
            {icon}
          </TaskButton>
        ))}
        <Clock>
          2:57 PM
          <br />
          11/26/2025
        </Clock>
      </Taskbar>
    </Window>
  );
}
